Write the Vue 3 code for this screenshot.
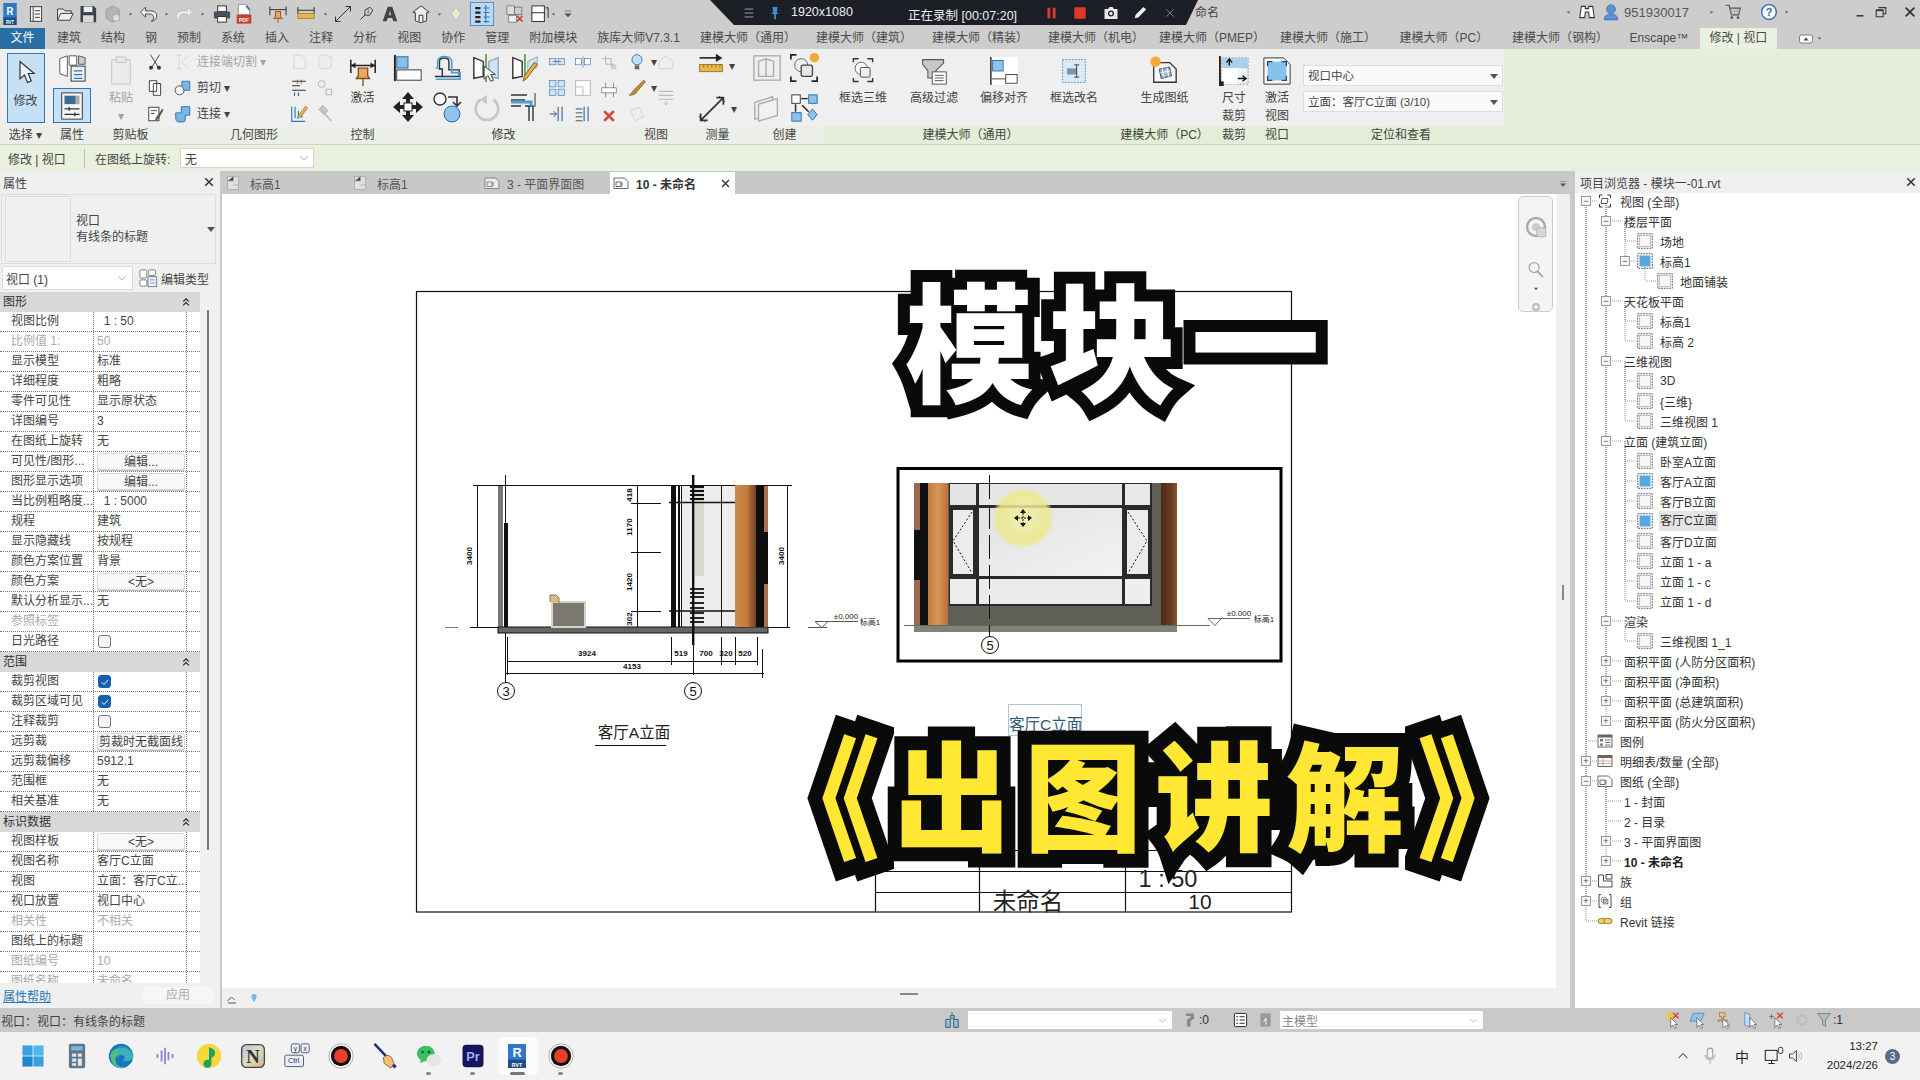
<script setup>
// icon bodies, all on a 32x32 box
const s = 'fill="none" stroke="#333" stroke-width="1.6"'
const d = 'fill="none" stroke="#aaa" stroke-width="1.4"'
const icons = {
  caret: '<path d="M8 11h16l-8 10z" fill="#555"/>',
  rlogo: '<rect x="4" y="0" width="24" height="22" fill="#2f78c8"/><rect x="4" y="21" width="24" height="11" fill="#1d4f86"/><text x="16" y="17" font-size="17" font-weight="700" fill="#fff" text-anchor="middle" font-family="Liberation Sans">R</text><text x="16" y="30" font-size="7" font-weight="700" fill="#fff" text-anchor="middle" font-family="Liberation Sans">RVT</text>',
  page: `<rect x="6" y="3" width="20" height="26" fill="#f4f4f4" ${s}/><path d="M11 3v26M14 10h9M14 16h9M14 22h9" ${s}/>`,
  open: `<path d="M4 26V8h9l3 3h10v4M4 26l5-11h20l-5 11z" fill="#eee" stroke="#444" stroke-width="1.6"/>`,
  save: '<path d="M4 3h21l4 4v22H4z" fill="#39404a"/><rect x="9" y="4" width="14" height="9" fill="#eee"/><rect x="8" y="18" width="17" height="11" fill="#d8d8d8"/>',
  sync: '<path d="M15 3l11 6v14l-11 6-10-6V9z" fill="#b5b5b5" stroke="#888"/><circle cx="21" cy="22" r="6" fill="#ddd" stroke="#888"/>',
  undo: `<path d="M12 5L4 13l8 8v-5h7c4 0 6 3 6 6s-2 5-4 6c6-1 9-5 9-9 0-5-4-8-10-8h-8z" fill="#eee" stroke="#444" stroke-width="1.5"/>`,
  redo: `<path d="M20 5l8 8-8 8v-5h-7c-4 0-6 3-6 6s2 5 4 6c-6-1-9-5-9-9 0-5 4-8 10-8h8z" fill="#eee" stroke="#bbb" stroke-width="1.5"/>`,
  print: '<rect x="9" y="3" width="14" height="9" fill="#fff" stroke="#333" stroke-width="1.6"/><rect x="3" y="12" width="26" height="11" rx="2" fill="#49525c"/><rect x="9" y="20" width="14" height="9" fill="#fff" stroke="#333" stroke-width="1.6"/>',
  pdf: '<path d="M6 2h13l7 7v8H6z" fill="#fff" stroke="#666"/><path d="M20 4l6 6" stroke="#2f78c8" stroke-width="3"/><rect x="3" y="17" width="26" height="13" fill="#c8402c"/><text x="16" y="27" font-size="9" font-weight="700" fill="#fff" text-anchor="middle" font-family="Liberation Sans">PDF</text>',
  pin: `<path d="M3 4v14M29 4v14M3 9h26" ${s}/><path d="M12 12h8v8l3 3H9l3-3zM16 23v7" fill="#e8a860" stroke="#8a4a18" stroke-width="1.4"/>`,
  dim: '<rect x="3" y="15" width="26" height="8" fill="#e6b84a" stroke="#8a6a18"/><path d="M3 5v10M29 5v10M3 10h26" fill="none" stroke="#333" stroke-width="1.6"/>',
  measure: `<path d="M4 28L28 4M20 4h8v8M4 20v8h8" ${s}/>`,
  tag: `<path d="M6 26l8-8M14 9l9-5 5 5-5 9H14z" ${s}/><text x="20" y="15" font-size="9" text-anchor="middle" fill="#333" font-family="Liberation Sans">1</text>`,
  letterA: '<path d="M12 3h8l9 26h-7l-2-6H12l-2 6H3zM14 18h4l-2-8z" fill="#444"/>',
  house: `<path d="M3 13L16 3l13 10-4 1v13l-9 3-9-3V14z" fill="#eee" stroke="#333" stroke-width="1.5"/><path d="M13 28V18h6v10" ${s}/>`,
  sphere: '<path d="M16 3l10 12-10 14L6 15z" fill="#f1e6cf" stroke="#999"/>',
  thin: '<rect x="0" y="0" width="32" height="32" fill="#bcd9f0" stroke="#2f78c8" stroke-width="2"/><path d="M7 8h7M7 14h7M7 20h7M7 26h7" stroke="#222" stroke-width="3"/><path d="M18 8h8M18 14h8M18 20h8M18 26h8M21 4v24" stroke="#2f78c8" stroke-width="1.5"/>',
  closew: '<rect x="3" y="3" width="12" height="14" fill="#ddd" stroke="#555"/><rect x="15" y="5" width="12" height="12" fill="#ccc" stroke="#555"/><rect x="6" y="18" width="12" height="11" fill="#eee" stroke="#555"/><path d="M19 19l9 9M28 19l-9 9" stroke="#c8402c" stroke-width="2.4"/>',
  windows: `<rect x="3" y="3" width="20" height="14" fill="#fff" ${s}/><rect x="3" y="14" width="20" height="14" fill="#fff" ${s}/><path d="M25 6h4v16" ${s}/>`,
  menu: '<path d="M6 8h20M8 15h16l-8 9z" fill="#555" stroke="#555" stroke-width="1.5"/>',

  cursor: '<path d="M8 2v23l6-5 4 10 5-2-4-10h8z" fill="#eaf3fb" stroke="#333" stroke-width="1.6"/>',
  typeprops: '<path d="M3 6l8-3v22l-8-3zM13 3h8v10h-8z" fill="#fff" stroke="#555"/><path d="M23 3l7 2v7h-7z" fill="#ccc" stroke="#555"/><rect x="15" y="14" width="15" height="16" fill="#eee" stroke="#333"/><path d="M18 19h9M18 23h9M18 27h9" stroke="#2f78c8" stroke-width="1.4"/>',
  props: '<rect x="5" y="2" width="22" height="28" fill="#f4f4f4" stroke="#333"/><rect x="8" y="5" width="12" height="9" fill="#3d6d96"/><rect x="20" y="5" width="4" height="9" fill="#aaa"/><path d="M8 19h16M8 25h16M13 17v4M19 23v4" stroke="#333" stroke-width="1.4"/>',
  paste: `<rect x="6" y="4" width="20" height="26" rx="2" fill="#e8e8e8" ${d}/><rect x="11" y="1" width="10" height="6" fill="#ddd" ${d}/>`,
  scissors: `<path d="M8 3l16 26M24 3L8 29" ${s}/><circle cx="9" cy="26" r="3.5" fill="#333"/><circle cx="23" cy="26" r="3.5" fill="#333"/>`,
  copy: `<path d="M6 3h13v5h7v21H13v-7H6z" fill="#fff" ${s}/><path d="M13 8h6v14h-6z" ${s}/>`,
  match: `<rect x="5" y="4" width="18" height="24" fill="#fff" ${s}/><path d="M9 10h10M9 15h6" ${s}/><path d="M29 6L18 22l-3 7 7-4L31 9z" fill="#555"/>`,
  joincut: `<path d="M5 4h8M5 28h8M9 4v24M13 16l14-12M13 16l14 12" ${d}/>`,
  cut: '<circle cx="10" cy="20" r="8" fill="#fff" stroke="#333" stroke-width="1.5"/><path d="M14 4h14v16H17a8 8 0 0 0-3-6z" fill="#7ab8e4" stroke="#2a6aa8" stroke-width="1.5"/>',
  joinb: '<path d="M13 3h15v15H20v10a4 4 0 0 1-4 2H8C4 30 3 26 3 22V14h10z" fill="#7ab8e4" stroke="#2a6aa8" stroke-width="1.6"/>',
  dimA: `<path d="M7 4h14l6 6v18H7z" fill="#f0f0f0" ${d}/>`,
  dimB: `<path d="M5 7l10-4 12 4v18l-12 4-10-4z" fill="#eee" stroke="#aaa" stroke-width="1.4"/>`,
  split: '<path d="M4 4h24M4 12h14M4 20h24" stroke="#333" stroke-width="2"/><path d="M8 24v6M15 24v6" stroke="#2a6aa8" stroke-width="2"/><path d="M13 1v8M20 1v8" stroke="#333"/>',
  circA: `<circle cx="10" cy="9" r="6" ${d}/><rect x="18" y="18" width="10" height="10" ${d}/>`,
  wallj: '<path d="M3 3v26h24M9 3v20M15 10v13M21 16v7" stroke="#2f78c8" stroke-width="2" fill="none"/><path d="M28 2L15 18l-2 6 6-3L31 6z" fill="#e9b44c" stroke="#7a5a10"/>',
  hammer: `<path d="M8 5l9 9M6 8l6-6 8 8-6 6zM15 15l12 13" stroke="#bbb" stroke-width="3" fill="#ddd"/>`,
  flip: '<path d="M3 4v14M29 4v14M3 10h26" fill="none" stroke="#222" stroke-width="1.6"/><path d="M3 10l5-3v6zM29 10l-5-3v6z" fill="#222"/><path d="M11 13h10v8l2 3H9l2-3zM16 24v8" fill="#e8a860" stroke="#8a4a18" stroke-width="1.4"/>',
  align: '<path d="M2 2v28" stroke="#222" stroke-width="2"/><rect x="4" y="4" width="12" height="12" fill="#86bfe8" stroke="#2a6aa8"/><rect x="4" y="18" width="26" height="11" fill="#fff" stroke="#333"/>',
  offset: '<path d="M3 25h8v-8h-3v-8c0-5 10-5 10 0v9h11v7H3" fill="none" stroke="#333" stroke-width="1.5"/><path d="M4 28h26v-7H21v-12C21 2 6 2 6 9v7H4" fill="none" stroke="#4a9fd8" stroke-width="1.8"/>',
  mirror: '<path d="M16 1v30" stroke="#6aa84f" stroke-width="2"/><path d="M3 5l10 4v16l-10 2z" fill="#fff" stroke="#333" stroke-width="1.5"/><path d="M29 5l-10 4v16l10 2z" fill="#cfe3f4" stroke="#8ab" stroke-width="1.5"/><path d="M14 14v14l4-4 3 6 3-1-3-6h5z" fill="#fff" stroke="#333"/>',
  mirror2: '<path d="M16 1v26" stroke="#6aa84f" stroke-width="2"/><path d="M3 5l10 4v16l-10 2z" fill="#fff" stroke="#333" stroke-width="1.5"/><path d="M29 4l-10 5v12l10-6z" fill="#cfe3f4" stroke="#8ab"/><path d="M29 12L18 27l-4 3 1-5 11-15z" fill="#e9b44c" stroke="#7a5a10"/>',
  move: '<path d="M16 1l6 7h-4v6h6v-4l7 6-7 6v-4h-6v6h4l-6 7-6-7h4v-6H8v4l-7-6 7-6v4h6V8h-4z" fill="#222"/><rect x="12" y="12" width="8" height="8" fill="#fff" stroke="#222"/>',
  copy2: '<circle cx="9" cy="8" r="6" fill="#fff" stroke="#333" stroke-width="1.4"/><path d="M17 6h9v8M22 11l4 4 4-4" fill="none" stroke="#333" stroke-width="1.6"/><circle cx="21" cy="23" r="8" fill="#8fc3ea" stroke="#2a6aa8"/>',
  rotate: '<path d="M24 7a12 12 0 1 1-14 0" fill="none" stroke="#c8c8c8" stroke-width="3"/><path d="M17 2l-8 5 8 5z" fill="#c8c8c8"/>',
  trim: '<path d="M2 9h14M2 15h10M2 4h16" stroke="#333" stroke-width="1.4"/><path d="M16 15h8v15M20 15v15" stroke="#333" fill="none" stroke-width="1.4"/><path d="M2 11h20v4" stroke="#4a9fd8" stroke-width="3" fill="none"/><path d="M26 2v14" stroke="#333"/>',
  sA: '<rect x="3" y="10" width="11" height="11" fill="#cfe3f4" stroke="#2a6aa8"/><rect x="18" y="10" width="11" height="11" fill="#cfe3f4" stroke="#2a6aa8"/><path d="M9 15h14" stroke="#333"/>',
  sB: '<rect x="3" y="10" width="10" height="11" fill="#fff" stroke="#2a6aa8"/><rect x="19" y="10" width="10" height="11" fill="#fff" stroke="#2a6aa8"/><path d="M16 6v20" stroke="#2a6aa8"/>',
  sC: `<path d="M10 4v16h16M4 10h16v16" ${d}/><path d="M21 21l8 8M29 21l-8 8" stroke="#bbb" stroke-width="2"/>`,
  sD: '<rect x="3" y="3" width="11" height="11" fill="#cfe3f4" stroke="#2a6aa8"/><rect x="18" y="3" width="11" height="11" fill="#cfe3f4" stroke="#2a6aa8"/><rect x="3" y="18" width="11" height="11" fill="#cfe3f4" stroke="#2a6aa8"/><rect x="18" y="18" width="11" height="11" fill="#cfe3f4" stroke="#2a6aa8"/>',
  sE: `<rect x="3" y="3" width="26" height="26" fill="#fff" ${d}/><path d="M3 14h13v15" ${d}/>`,
  sF: `<path d="M10 3v26M24 3v26" stroke="#444"/><path d="M3 12h26v9H3z" fill="#fff" stroke="#444"/>`,
  sG: '<path d="M3 16h12M10 11l5 5-5 5" fill="none" stroke="#333" stroke-width="1.5"/><path d="M18 3v26M25 3v26" stroke="#2a6aa8" stroke-width="2"/>',
  sH: '<path d="M3 7h12M3 14h12M3 21h12M3 28h12" stroke="#333" stroke-width="1.5"/><path d="M18 3v26M25 3v26" stroke="#2a6aa8" stroke-width="2"/>',
  redX: '<path d="M5 5l22 22M27 5L5 27" stroke="#d8453a" stroke-width="6"/>',
  bulb: '<circle cx="16" cy="12" r="9" fill="#bfe0f6" stroke="#2a6aa8" stroke-width="1.5"/><rect x="12" y="22" width="8" height="7" fill="#666"/>',
  homeD: `<path d="M4 15L16 5l12 10v13H4z" fill="#eee" ${d}/>`,
  paint: '<path d="M28 2L13 17l-5 5c-2 3-3 5-6 7 7 0 12-2 15-8L31 5z" fill="#c8882c" stroke="#5a3a10"/>',
  lines: '<path d="M3 6h26M3 13h26M3 20h26" stroke="#bbb" stroke-width="2"/><path d="M16 22v8M12 26l4 4 4-4" stroke="#bbb" fill="none" stroke-width="1.5"/>',
  section: `<path d="M4 9l16-5 8 17-16 7z" fill="#eee" ${d}/>`,
  ruler: '<path d="M2 6h24" stroke="#222" stroke-width="2"/><path d="M22 1l8 5-8 5z" fill="#222"/><rect x="2" y="14" width="28" height="9" fill="#e6b84a" stroke="#8a6a18"/><path d="M7 14v4M12 14v4M17 14v4M22 14v4M27 14v4" stroke="#8a6a18"/>',
  diag: '<path d="M3 29L29 3M21 3h8v8M3 21v8h8" fill="none" stroke="#333" stroke-width="2"/><path d="M1 24l7 7M24 1l7 7" stroke="#333"/>',
  cubes: `<rect x="2" y="3" width="28" height="26" fill="none" ${d}/><path d="M7 9l8-3 8 3v16H7zM15 6v19" fill="#eee" ${d}/>`,
  crop3d: '<path d="M2 7V2h6M2 25v5h6M30 7V2h-6M30 25v5h-6" fill="none" stroke="#222" stroke-width="1.8"/><circle cx="13" cy="13" r="7" fill="#eee" stroke="#666"/><rect x="13" y="13" width="12" height="12" rx="2" fill="#e6e6e6" stroke="#444" stroke-width="1.4"/><circle cx="27" cy="5" r="5" fill="#f4a83a"/>',
  sheets: `<path d="M3 10l19-6v18L3 28z" fill="#eee" ${d}/><path d="M7 12l20-6v18L7 30z" fill="#f2f2f2" ${d}/>`,
  flow: '<rect x="3" y="2" width="9" height="9" fill="#fff" stroke="#333"/><rect x="21" y="2" width="9" height="9" fill="#8fc3ea" stroke="#2a6aa8"/><path d="M13 6h7M7 12v8M14 13l7 7" stroke="#222" stroke-width="1.5"/><rect x="3" y="21" width="10" height="9" fill="#8fc3ea" stroke="#2a6aa8"/><path d="M25 17l5 6-5 6-5-6z" fill="#8fc3ea" stroke="#2a6aa8"/>',
  crop3: '<path d="M5 6V2h6M5 24v4h6M27 6V2h-6M27 24v4h-6" fill="none" stroke="#333" stroke-width="1.6"/><circle cx="14" cy="13" r="7" fill="#fff" stroke="#555"/><rect x="13" y="12" width="11" height="11" rx="1" fill="#eee" stroke="#444"/>',
  filter: '<path d="M3 3h24v4L18 16v8H9v-8L3 8z" fill="#c8c8c8" stroke="#555" stroke-width="1.2"/><rect x="14" y="17" width="16" height="14" fill="#fff" stroke="#444"/><path d="M17 21h10M17 24h10M17 27h10" stroke="#444"/>',
  offsetA: '<rect x="0" y="0" width="32" height="32" fill="#fff"/><path d="M1 0v32" stroke="#222" stroke-width="1.6"/><rect x="3" y="4" width="12" height="12" fill="#8fc3ea" stroke="#2a6aa8"/><rect x="18" y="20" width="13" height="10" fill="#fff" stroke="#333"/><path d="M2 25h16" stroke="#333"/>',
  rename: '<rect x="3" y="3" width="26" height="26" fill="#dceaf6" stroke="#4a84b8" stroke-dasharray="2 1.5"/><rect x="8" y="13" width="11" height="7" fill="#7a96b0"/><path d="M19 9v14M16 9h6M16 23h6" stroke="#333"/>',
  makesheet: '<path d="M5 7h17l7 7v14H5z" fill="#f6f6f6" stroke="#333" stroke-width="1.4"/><path d="M11 14l11-2 2 9-11 3z" fill="#9fb8cf" stroke="#345"/><path d="M14 13l2 10M19 12l2 10M12 18l11-2" stroke="#fff"/><circle cx="7" cy="6" r="5.5" fill="#f4a83a"/>',
  cropS: '<path d="M1 0v31" stroke="#222" stroke-width="2"/><rect x="3" y="2" width="28" height="28" fill="#eef3f7" stroke="#888" stroke-dasharray="2 1.5"/><rect x="3" y="2" width="28" height="11" fill="#a9cfea"/><rect x="3" y="13" width="17" height="17" fill="#fff"/><path d="M11 10V4M8 7l3-4 3 4M20 24h8M25 21l4 3-4 3" stroke="#111" fill="none" stroke-width="1.4"/><rect x="0" y="27" width="5" height="5" fill="#222"/>',
  activate: '<path d="M2 2h21l7 7v21H2z" fill="#f6f6f6" stroke="#333"/><rect x="6" y="6" width="20" height="20" fill="#86c3ec"/><path d="M6 11V6h5M26 11V6h-5M6 21v5h5M26 21v5h-5" fill="none" stroke="#246" stroke-width="1.4"/>',

  editType: '<rect x="3" y="3" width="11" height="13" rx="2" fill="#fff" stroke="#444"/><rect x="17" y="3" width="11" height="9" rx="2" fill="#fff" stroke="#444"/><rect x="3" y="19" width="11" height="10" rx="2" fill="#fff" stroke="#444"/><rect x="16" y="14" width="14" height="16" fill="#eef" stroke="#345"/><path d="M19 19h8M19 24h8" stroke="#2a6aa8"/>',
  sqNormal: '<rect x="1.5" y="1.5" width="29" height="29" fill="none" stroke="#444" stroke-dasharray="3.5 2" stroke-width="1.8"/><rect x="5" y="5" width="22" height="22" fill="#f6f6f6" stroke="#aaa" stroke-width="1.4"/>',
  sqBlue: '<rect x="1.5" y="1.5" width="29" height="29" fill="none" stroke="#345" stroke-dasharray="3.5 2" stroke-width="1.8"/><rect x="5" y="5" width="22" height="22" fill="#5aa7e0"/>',
  views: '<path d="M5 10V4h6M21 4h6v6M5 22v6h6M27 22v6h-6" fill="none" stroke="#333" stroke-width="2"/><path d="M10 11h12l-2 10H8z" fill="#fff" stroke="#333" stroke-width="1.6"/>',
  legend: '<rect x="2" y="4" width="28" height="24" fill="#fff" stroke="#444" stroke-width="1.6"/><rect x="2" y="4" width="28" height="5" fill="#666"/><rect x="6" y="12" width="6" height="5" fill="#778"/><circle cx="9" cy="23" r="3" fill="#778"/><path d="M16 14h11M16 19h11M16 24h11" stroke="#444" stroke-width="1.5"/>',
  table: '<rect x="2" y="5" width="28" height="22" fill="#fff" stroke="#444" stroke-width="1.6"/><rect x="2" y="5" width="28" height="5" fill="#666"/><path d="M12 10v17M2 16h28M2 21h28" stroke="#c08a80" stroke-width="1.4"/>',
  sheet: '<path d="M2 6h21l7 7v14H2z" fill="#fff" stroke="#444" stroke-width="1.6"/><path d="M6 14h10v9H6zM18 14v9" fill="none" stroke="#444" stroke-width="1.6"/>',
  fam: '<path d="M3 4h10v12h17v12H3zM18 3h12v9H18z" fill="#fff" stroke="#333" stroke-width="1.8"/>',
  group: '<path d="M8 3H4v26h4M24 3h4v26h-4" fill="none" stroke="#333" stroke-width="1.8"/><circle cx="14" cy="14" r="6" fill="#ddd" stroke="#555"/><rect x="13" y="13" width="9" height="9" fill="#bbb" stroke="#444"/>',
  link: '<rect x="2" y="11" width="16" height="10" rx="5" fill="#f0d066" stroke="#8a6a18" stroke-width="1.6"/><rect x="14" y="11" width="16" height="10" rx="5" fill="#f0d066" stroke="#8a6a18" stroke-width="1.6"/>',

  win: '<rect x="3" y="3" width="12.5" height="12.5" fill="#3aa0e4"/><rect x="16.5" y="3" width="12.5" height="12.5" fill="#52b6ee"/><rect x="3" y="16.5" width="12.5" height="12.5" fill="#1e86d2"/><rect x="16.5" y="16.5" width="12.5" height="12.5" fill="#3aa0e4"/>',
  calc: '<rect x="6" y="1" width="20" height="30" rx="2" fill="#5f7788"/><rect x="9" y="4" width="14" height="5" fill="#7fb6d8"/><path d="M10 13h5v4h-5zM17 13h5v4h-5zM10 19h5v4h-5zM17 19h5v9h-5zM10 25h5v3h-5z" fill="#dfe6ea"/>',
  edge: '<circle cx="16" cy="16" r="15" fill="#1674c4"/><path d="M3 14C6 3 28 2 31 17c0 4-7 6-12 4 3-2 3-6-3-7-6 0-9 6-5 12 2 3 8 5 13 3-9 6-22-1-21-15z" fill="#4ec07a"/><path d="M12 20c1-5 8-7 8-2 0 2-2 3-2 4 3 2 13 0 13-5-1-11-12-14-18-13z" fill="#33a7d8" opacity=".6"/>',
  audio: '<path d="M5 13v6M11 8v16M16 4v24M21 10v12M27 13v6" stroke="#8c82d8" stroke-width="2.6"/>',
  qqm: '<circle cx="16" cy="16" r="15" fill="#f6d83a"/><path d="M16 5l6 3c3 5 1 9-3 10v7a5 5 0 1 1-3-4z" fill="#20a060"/>',
  nApp: '<defs><linearGradient id="napp" x1="0" y1="0" x2="1" y2="1"><stop offset="0" stop-color="#c8b8e0"/><stop offset=".5" stop-color="#d8e0c0"/><stop offset="1" stop-color="#e0b090"/></linearGradient></defs><rect x="2" y="2" width="28" height="28" rx="6" fill="url(#napp)" stroke="#444" stroke-width="1.6"/><text x="16" y="25" font-size="23" font-weight="700" fill="#333" text-anchor="middle" font-family="Liberation Serif">N</text>',
  keys: '<rect x="9" y="1" width="10" height="11" rx="2" fill="#eef" stroke="#345"/><rect x="21" y="1" width="10" height="11" rx="2" fill="#eef" stroke="#345"/><rect x="1" y="15" width="23" height="14" rx="2" fill="#eef" stroke="#345"/><text x="14" y="10" font-size="8" text-anchor="middle" fill="#234" font-family="Liberation Sans">y</text><text x="26" y="10" font-size="8" text-anchor="middle" fill="#234" font-family="Liberation Sans">x</text><text x="12" y="25" font-size="9" text-anchor="middle" fill="#234" font-family="Liberation Sans">Ctrl</text>',
  rec: '<circle cx="16" cy="16" r="15" fill="#fff" stroke="#999"/><circle cx="16" cy="16" r="12.5" fill="#111"/><circle cx="16" cy="16" r="8.5" fill="#e8402c"/>',
  brush: '<path d="M3 1l19 20" stroke="#1d2f86" stroke-width="3"/><path d="M14 18c4-4 8-3 10 0l3 7-4 6-8-6z" fill="#f0c078" stroke="#7a5a20"/><path d="M26 27l3 3" stroke="#1d2f86" stroke-width="4"/>',
  wechat: '<ellipse cx="12" cy="13" rx="11" ry="9.5" fill="#38c060"/><path d="M6 20l-1 5 6-3z" fill="#38c060"/><ellipse cx="22" cy="21" rx="9" ry="7.5" fill="#e4e4e4"/><circle cx="8" cy="11" r="1.6" fill="#145"/><circle cx="16" cy="11" r="1.6" fill="#145"/>',
  pr: '<rect x="2" y="1" width="28" height="30" rx="5" fill="#15155e"/><text x="16" y="23" font-size="17" font-weight="700" fill="#a9a9ff" text-anchor="middle" font-family="Liberation Sans">Pr</text>',
  mic: '<rect x="11" y="2" width="10" height="18" rx="5" fill="none" stroke="#999" stroke-width="1.8"/><path d="M7 14c0 12 18 12 18 0M16 25v5" fill="none" stroke="#999" stroke-width="1.6"/>',
  chev: '<path d="M6 21L16 10l10 11" fill="none" stroke="#222" stroke-width="2.2"/>',
  pcnet: `<rect x="2" y="7" width="19" height="16" fill="none" stroke="#222" stroke-width="1.6"/><path d="M7 28h10M12 23v5" stroke="#222" stroke-width="1.6"/><rect x="23" y="2" width="7" height="10" rx="3" fill="none" stroke="#222" stroke-width="1.4"/>`,
  speaker: '<path d="M3 12h6l8-7v22l-8-7H3z" fill="none" stroke="#222" stroke-width="1.6"/><path d="M21 11c2 3 2 7 0 10M25 8c3 5 3 11 0 16" fill="none" stroke="#999" stroke-width="1.4"/>',

  people: '<path d="M13 8h7v5h-7zM5 15h8v14H5zM19 15h8v14h-8z" fill="#8fc3ea" stroke="#345" stroke-width="1.5"/><path d="M16 2v6" stroke="#4a9" stroke-width="3"/>',
  q0: '<path d="M8 3h16v10l-7 5v11H10V15l7-4V8H8z" fill="#888"/>',
  listbox: '<rect x="3" y="2" width="26" height="28" rx="2" fill="#fff" stroke="#222" stroke-width="2"/><path d="M7 9h4M7 16h4M7 23h4M14 9h11M14 16h11M14 23h11" stroke="#222" stroke-width="2"/>',
  lockbox: '<rect x="5" y="2" width="22" height="28" fill="#999"/><path d="M12 20l5-8v14" stroke="#fff" stroke-width="2" fill="none"/>',
  stA: '<circle cx="10" cy="9" r="7" fill="#eec060"/><path d="M16 3l10 10M26 3L16 13" stroke="#d8453a" stroke-width="2.6"/><path d="M12 12v17l4-4 3 6 3-1-3-6h5z" fill="#fff" stroke="#333"/>',
  stB: '<path d="M7 4h20l-6 14H2z" fill="#8fc3ea" stroke="#2a6aa8"/><path d="M14 12v17l4-4 3 6 3-1-3-6h5z" fill="#fff" stroke="#333"/>',
  stC: '<path d="M8 3h10v7h-3v6h7v2H5v-2h7v-6H8z" fill="#eec090" stroke="#8a5a18"/><path d="M14 14v16l4-4 3 5 3-1-3-5h5z" fill="#fff" stroke="#333"/>',
  stD: '<path d="M5 3l9 3v22l-9-3z" fill="#bfe0f6" stroke="#2a6aa8"/><path d="M14 12v17l4-4 3 6 3-1-3-6h5z" fill="#fff" stroke="#333"/>',
  stE: '<path d="M4 10h8M8 6v8" stroke="#333"/><path d="M18 3l10 10M28 3L18 13" stroke="#d8453a" stroke-width="2.6"/><path d="M14 12v17l4-4 3 6 3-1-3-6h5z" fill="#fff" stroke="#333"/>',
  gear: '<circle cx="16" cy="16" r="9" fill="none" stroke="#bbb" stroke-width="5" stroke-dasharray="5 2"/>',
  funnel: '<path d="M3 3h26L19 16v13l-6-4v-9z" fill="#bbb" stroke="#666" stroke-width="1.4"/>',
  // recorder bar
  hamb: '<path d="M6 7h20M6 16h20M6 25h20" stroke="#ddd" stroke-width="1.5"/>',
  recpin: '<path d="M10 2h12l-2 12 5 4H18v12h-4V18H7l5-4z" fill="#3d8ed8"/>',
  pause: '<path d="M6 3h7v26H6zM19 3h7v26h-7z" fill="#e0392b"/>',
  stop: '<rect x="3" y="3" width="26" height="26" rx="2" fill="#e0392b"/>',
  camera: '<path d="M3 8h7l3-4h6l3 4h7v20H3z" fill="#e8e8e8"/><circle cx="16" cy="17" r="6" fill="#222"/><circle cx="16" cy="17" r="3.4" fill="#e8e8e8"/>',
  pen: '<path d="M24 2l6 6L12 26l-8 2 2-8z" fill="#eee"/>',
  xThin: '<path d="M6 6l20 20M26 6L6 26" stroke="#ccc" stroke-width="1.4"/>',
  binoc: '<path d="M6 6h7v4h6V6h7l3 20h-9l-1-10h-6l-1 10H3z" fill="#fff" stroke="#333" stroke-width="1.8"/>',
  user: '<circle cx="16" cy="11" r="8" fill="#5a94d4" stroke="#2a5a98"/><path d="M4 30c0-9 6-10 12-10s12 1 12 10z" fill="#5a94d4" stroke="#2a5a98"/>',
  cart: '<path d="M3 4h6l4 17h13l3-12H11" fill="none" stroke="#555" stroke-width="2"/><path d="M13 10v10M19 10v10M24 10v10M11 15h17" stroke="#8a9" stroke-width="1"/><circle cx="14" cy="26" r="2.4" fill="#555"/><circle cx="25" cy="26" r="2.4" fill="#555"/>',
  help: '<circle cx="16" cy="16" r="13" fill="#fff" stroke="#2a6ab8" stroke-width="2.4"/><text x="16" y="23" font-size="20" font-weight="700" text-anchor="middle" fill="#2a6ab8" font-family="Liberation Sans">?</text>',
  minimize: '<rect x="8" y="23" width="16" height="3.4" fill="#333"/>',
  restore: '<path d="M10 6h17v14h-6M5 12h16v15H5z" fill="none" stroke="#333" stroke-width="2.4"/><path d="M5 12h16" stroke="#333" stroke-width="4"/>',
  xBold: '<path d="M6 6l20 20M26 6L6 26" stroke="#333" stroke-width="4"/>',
  panelBtn: '<rect x="3" y="8" width="26" height="16" rx="4" fill="#fff" stroke="#555" stroke-width="1.4"/><path d="M11 19l5-6 5 6z" fill="#444"/>',
  tabplan: '<rect x="5" y="3" width="22" height="26" fill="#eee" stroke="#999" stroke-width="1.6"/><path d="M5 12h12V3M17 20h10" stroke="#999" stroke-width="1.6"/>',
  navWheel: '<circle cx="16" cy="16" r="11" fill="none" stroke="#aaa" stroke-width="3"/><circle cx="16" cy="16" r="5" fill="#ccc"/><rect x="17" y="17" width="11" height="11" rx="2" fill="#d8d8d8" stroke="#aaa"/>',
  navZoom: '<circle cx="13" cy="12" r="8" fill="none" stroke="#aaa" stroke-width="2"/><path d="M18 18l9 9" stroke="#aaa" stroke-width="3"/>',
  sLink: '<path d="M3 22c3-1 4-7 8-7 3 0 3 4 6 4M4 26h16" fill="none" stroke="#555" stroke-width="2"/>',
  sPin: '<path d="M16 5a7 7 0 0 1 7 7c0 5-7 15-7 15S9 17 9 12a7 7 0 0 1 7-7z" fill="#7ab8e4"/>'
}

// places items at centre x values in a flex row
const placed = (list) => {
  let right = 0
  return list.map(([i, cx, size = 18, h]) => {
    const m = cx - size / 2 - right
    right = cx + size / 2
    return { i, size, h: h || size, m }
  })
}

const titleLeft = placed([
  ['rlogo', 10, 18, 22], ['page', 36], ['open', 65, 20], ['save', 88, 20], ['sync', 113, 20], ['caret', 130, 7],
  ['undo', 148, 20], ['caret', 166, 7], ['redo', 185, 20], ['caret', 202, 7], ['print', 222, 20], ['pdf', 244, 18, 22],
  ['pin', 278, 20], ['dim', 306, 20], ['caret', 325, 7], ['measure', 343, 20], ['tag', 366, 18], ['letterA', 390, 18],
  ['house', 421, 20], ['caret', 439, 7], ['sphere', 456, 16], ['thin', 482, 24], ['closew', 515, 20], ['windows', 540, 20],
  ['caret', 553, 7], ['menu', 568, 12]
])
const titleRight = placed([
  ['caret', 248, 7], ['binoc', 267, 18], ['user', 291, 18]
])
const titleEnd = placed([
  ['caret', 3, 7], ['cart', 25, 18], ['help', 61, 18], ['caret', 78, 7], ['minimize', 152, 14], ['restore', 173, 14], ['xBold', 202, 14]
])

const tabsA = ['建筑', '结构', '钢', '预制', '系统', '插入', '注释', '分析', '视图', '协作', '管理', '附加模块', '族库大师V7.3.1']
const tabsB = ['建模大师（通用）', '建模大师（建筑）', '建模大师（精装）', '建模大师（机电）', '建模大师（PMEP）', '建模大师（施工）', '建模大师（PC）', '建模大师（钢构）']

const sm = (i, t, extra = {}) => ({ i, t, size: 18, ...extra })
const panels = [
  { label: '选择 ▾', w: 51, cols: [{ w: 51, items: [{ i: 'cursor', t: '修改', size: 24, cls: 'sel tall' }] }] },
  { label: '属性', w: 42, cols: [{ w: 42, items: [{ i: 'typeprops', size: 30 }, { i: 'props', size: 30, cls: 'sel box' }] }] },
  { label: '剪贴板', w: 75, pl: 6, cols: [
    { w: 44, items: [{ i: 'paste', t: '粘贴\n▾', size: 32, cls: 'tile dim' }] },
    { w: 24, items: [sm('scissors'), sm('copy'), sm('match')] }
  ] },
  { label: '几何图形', w: 172, pl: 6, cols: [
    { w: 112, items: [sm('joincut', '连接端切割 ▾', { cls: 'row dim' }), sm('cut', '剪切 ▾', { cls: 'row' }), sm('joinb', '连接 ▾', { cls: 'row' })] },
    { w: 26, items: [sm('dimA', '', { cls: 'dim' }), sm('split'), sm('wallj')] },
    { w: 26, items: [sm('dimB', '', { cls: 'dim' }), sm('circA'), sm('hammer')] }
  ] },
  { label: '控制', w: 45, cols: [{ w: 45, items: [{ i: 'flip', t: '激活', size: 32, cls: 'tile' }] }] },
  { label: '修改', w: 237, pl: 3, cols: [
    { w: 39, items: [{ i: 'align', size: 30 }, { i: 'move', size: 32 }] },
    { w: 39, items: [{ i: 'offset', size: 30 }, { i: 'copy2', size: 32 }] },
    { w: 39, items: [{ i: 'mirror', size: 30 }, { i: 'rotate', size: 30 }] },
    { w: 39, items: [{ i: 'mirror2', size: 30 }, { i: 'trim', size: 32 }] },
    { w: 26, items: [sm('sA'), sm('sD'), sm('sG')] },
    { w: 26, items: [sm('sB'), sm('sE'), sm('sH')] },
    { w: 26, items: [sm('sC'), sm('sF'), sm('redX', '', { size: 14 })] }
  ] },
  { label: '视图', w: 68, pl: 6, cols: [
    { w: 26, items: [sm('bulb', '▾', { cls: 'row' }), sm('paint', '▾', { cls: 'row' }), sm('section', '', { cls: 'row dim' })] },
    { w: 24, items: [sm('homeD', '', { cls: 'dim' }), sm('lines'), { i: 'caret', size: 1 }] }
  ] },
  { label: '测量', w: 55, pl: 8, cols: [{ w: 47, items: [{ i: 'ruler', t: '▾', size: 26, cls: 'row' }, { i: 'diag', t: '▾', size: 28, cls: 'row' }] }] },
  { label: '创建', w: 79, pl: 3, cols: [
    { w: 38, items: [{ i: 'cubes', size: 30 }, { i: 'sheets', size: 30 }] },
    { w: 36, items: [{ i: 'crop3d', size: 30 }, { i: 'flow', size: 30 }] }
  ] },
  { label: '建模大师（通用）', w: 293, pl: 3, cls: 'green', cols: [
    { w: 72, items: [{ i: 'crop3', t: '框选三维', size: 28, cls: 'tile' }] },
    { w: 70, items: [{ i: 'filter', t: '高级过滤', size: 28, cls: 'tile' }] },
    { w: 70, items: [{ i: 'offsetA', t: '偏移对齐', size: 28, cls: 'tile' }] },
    { w: 70, items: [{ i: 'rename', t: '框选改名', size: 28, cls: 'tile' }] }
  ] },
  { label: '建模大师（PC）', w: 95, cls: 'green', cols: [{ w: 95, items: [{ i: 'makesheet', t: '生成图纸', size: 30, cls: 'tile' }] }] },
  { label: '裁剪', w: 44, cls: 'green', cols: [{ w: 44, items: [{ i: 'cropS', t: '尺寸\n裁剪', size: 30, cls: 'tile' }] }] },
  { label: '视口', w: 42, cls: 'green', cols: [{ w: 42, items: [{ i: 'activate', t: '激活\n视图', size: 30, cls: 'tile' }] }] }
]

const sections = [
  { name: '图形', rows: [
    { k: '视图比例', v: '  1 : 50' }, { k: '比例值 1:', v: '50', dim: true }, { k: '显示模型', v: '标准' }, { k: '详细程度', v: '粗略' },
    { k: '零件可见性', v: '显示原状态' }, { k: '详图编号', v: '3' }, { k: '在图纸上旋转', v: '无' },
    { k: '可见性/图形...', btn: '编辑...' }, { k: '图形显示选项', btn: '编辑...' }, { k: '当比例粗略度...', v: '  1 : 5000' },
    { k: '规程', v: '建筑' }, { k: '显示隐藏线', v: '按规程' }, { k: '颜色方案位置', v: '背景' }, { k: '颜色方案', btn: '<无>' },
    { k: '默认分析显示...', v: '无' }, { k: '参照标签', v: '', dim: true }, { k: '日光路径', check: 0 }
  ] },
  { name: '范围', rows: [
    { k: '裁剪视图', check: 1 }, { k: '裁剪区域可见', check: 1 }, { k: '注释裁剪', check: 0 }, { k: '远剪裁', btn: '剪裁时无截面线' },
    { k: '远剪裁偏移', v: '5912.1' }, { k: '范围框', v: '无' }, { k: '相关基准', v: '无' }
  ] },
  { name: '标识数据', rows: [
    { k: '视图样板', btn: '<无>' }, { k: '视图名称', v: '客厅C立面' }, { k: '视图', v: '立面：客厅C立...' }, { k: '视口放置', v: '视口中心' },
    { k: '相关性', v: '不相关', dim: true }, { k: '图纸上的标题', v: '' }, { k: '图纸编号', v: '10', dim: true }, { k: '图纸名称', v: '未命名', dim: true }
  ] }
]

const tree = [
  ['视图 (全部)', 0, '-', 'views'], ['楼层平面', 1, '-'], ['场地', 2, '', 'sqNormal'], ['标高1', 2, '-', 'sqBlue'], ['地面铺装', 3, '', 'sqNormal'],
  ['天花板平面', 1, '-'], ['标高1', 2, '', 'sqNormal'], ['标高 2', 2, '', 'sqNormal'], ['三维视图', 1, '-'], ['3D', 2, '', 'sqNormal'],
  ['{三维}', 2, '', 'sqNormal'], ['三维视图 1', 2, '', 'sqNormal'], ['立面 (建筑立面)', 1, '-'], ['卧室A立面', 2, '', 'sqNormal'], ['客厅A立面', 2, '', 'sqBlue'],
  ['客厅B立面', 2, '', 'sqNormal'], ['客厅C立面', 2, '', 'sqBlue', 'cur'], ['客厅D立面', 2, '', 'sqNormal'], ['立面 1 - a', 2, '', 'sqNormal'], ['立面 1 - c', 2, '', 'sqNormal'],
  ['立面 1 - d', 2, '', 'sqNormal'], ['渲染', 1, '-'], ['三维视图 1_1', 2, '', 'sqNormal'], ['面积平面 (人防分区面积)', 1, '+'], ['面积平面 (净面积)', 1, '+'],
  ['面积平面 (总建筑面积)', 1, '+'], ['面积平面 (防火分区面积)', 1, '+'], ['图例', 0, '', 'legend'], ['明细表/数量 (全部)', 0, '+', 'table'], ['图纸 (全部)', 0, '-', 'sheet'],
  ['1 - 封面', 1, ''], ['2 - 目录', 1, ''], ['3 - 平面界面图', 1, '+'], ['10 - 未命名', 1, '+', null, 'bold'], ['族', 0, '+', 'fam'], ['组', 0, '+', 'group'], ['Revit 链接', 0, '', 'link']
].map(([t, lv, tog, icon, cls]) => ({ t, lv, tog, icon, cls }))

// dotted guide lines of the tree
const guideX = [16, 36, 55, 75]
const guideEnd = [27, 51, 67, 87]
const rowY = (i) => i * 20 + 10
const treeGuides = tree.map((r, i) => {
  let parent = i - 1
  while (parent >= 0 && tree[parent].lv >= r.lv) parent--
  const x = guideX[r.lv]
  const top = parent < 0 ? rowY(0) : rowY(parent)
  return `M${x} ${top}V${rowY(i)}M${x} ${rowY(i)}H${guideEnd[r.lv]}`
}).join('')

const statusIcons = placed([
  ['people', 52, 18]
])
const statusFilters = placed([
  ['stA', 14], ['stB', 39], ['stC', 65], ['stD', 92], ['stE', 117], ['gear', 143, 16], ['funnel', 165, 16]
])
const taskIcons = placed([
  ['win', 33, 26], ['calc', 77, 26], ['edge', 121, 26], ['audio', 165, 22], ['qqm', 209, 26], ['nApp', 253, 26], ['keys', 297, 26], ['rec', 341, 26],
  ['brush', 385, 26], ['wechat', 429, 26], ['pr', 473, 24], ['rlogo', 517, 24], ['rec', 561, 26]
])
const trayIcons = placed([
  ['chev', 10, 14], ['mic', 37, 18]
])

const vTicks = [503, 552, 611]
const hatch = [487, 491, 495, 499]
const hatchB = [589, 593, 597, 603, 608, 613, 618, 622]
</script>

<template>
  <div class="app">
    <!-- quick access bar -->
    <div class="titlebar">
      <svg v-for="(c, n) in titleLeft" :key="n" :width="c.size" :height="c.h" :style="{ marginLeft: c.m + 'px' }" viewBox="0 0 32 32" preserveAspectRatio="none" v-html="icons[c.i]"></svg>
      <div class="doc-name">命名</div>
      <div class="title-right">
        <svg v-for="(c, n) in titleRight" :key="n" :width="c.size" :height="c.h" :style="{ marginLeft: c.m + 'px' }" viewBox="0 0 32 32" v-html="icons[c.i]"></svg>
        <span class="uid">951930017</span>
        <svg v-for="(c, n) in titleEnd" :key="n" :width="c.size" :height="c.h" :style="{ marginLeft: c.m + 'px' }" viewBox="0 0 32 32" v-html="icons[c.i]"></svg>
      </div>
      <!-- recorder overlay -->
      <div class="recorder">
        <svg class="rec-bg" width="488" height="25" viewBox="0 0 488 25"><path d="M0 0h488l-12 25H24z" fill="#1c2026"/></svg>
        <svg class="rec-ic hamb" width="14" height="14" viewBox="0 0 32 32" v-html="icons.hamb"></svg>
        <svg class="rec-ic pin" width="14" height="16" viewBox="0 0 32 32" v-html="icons.recpin"></svg>
        <span class="rec-size">1920x1080</span>
        <span class="rec-time">正在录制 [00:07:20]</span>
        <svg class="rec-ic pause" width="13" height="14" viewBox="0 0 32 32" v-html="icons.pause"></svg>
        <svg class="rec-ic stop" width="14" height="14" viewBox="0 0 32 32" v-html="icons.stop"></svg>
        <svg class="rec-ic cam" width="16" height="16" viewBox="0 0 32 32" v-html="icons.camera"></svg>
        <svg class="rec-ic pen" width="14" height="14" viewBox="0 0 32 32" v-html="icons.pen"></svg>
        <svg class="rec-ic closer" width="12" height="12" viewBox="0 0 32 32" v-html="icons.xThin"></svg>
      </div>
    </div>

    <!-- ribbon tabs -->
    <div class="tabs">
      <div class="tab file">文件</div>
      <div v-for="t in tabsA" :key="t" class="tab">{{ t }}</div>
      <div v-for="t in tabsB" :key="t" class="tab wide">{{ t }}</div>
      <div class="tab enscape">Enscape™</div>
      <div class="tab active">修改 | 视口</div>
      <svg class="tab-ic" width="16" height="16" viewBox="0 0 32 32" v-html="icons.panelBtn"></svg>
      <svg width="7" height="7" viewBox="0 0 32 32" v-html="icons.caret"></svg>
    </div>

    <!-- ribbon -->
    <div class="ribbon">
      <div v-for="p in panels" :key="p.label" class="panel" :class="p.cls" :style="{ width: p.w + 'px' }">
        <div class="panel-body" :style="{ paddingLeft: (p.pl || 0) + 'px' }">
          <div v-for="(c, n) in p.cols" :key="n" class="col" :style="{ width: c.w + 'px' }">
            <div v-for="(it, m) in c.items" :key="m" class="tool" :class="it.cls">
              <svg :width="it.size" :height="it.size" viewBox="0 0 32 32" v-html="icons[it.i]"></svg>
              <span v-if="it.t">{{ it.t }}</span>
            </div>
          </div>
        </div>
        <div class="panel-label">{{ p.label }}</div>
      </div>
      <div class="panel green locate">
        <div class="panel-body locate-body">
          <div class="rb-select">视口中心<i class="rb-arrow"></i></div>
          <div class="rb-select">立面：客厅C立面 (3/10)<i class="rb-arrow"></i></div>
        </div>
        <div class="panel-label">定位和查看</div>
      </div>
      <div class="ribbon-rest"></div>
    </div>

    <!-- options bar -->
    <div class="options">
      <span class="opt-mode">修改 | 视口</span>
      <span class="opt-sep"></span>
      <span class="opt-label">在图纸上旋转:</span>
      <div class="opt-select">无<svg width="10" height="10" viewBox="0 0 32 32"><path d="M5 11l11 11 11-11" fill="none" stroke="#888" stroke-width="2.5"/></svg></div>
    </div>

    <div class="main">
      <!-- properties -->
      <aside class="props">
        <div class="pane-head">属性<svg width="12" height="12" viewBox="0 0 32 32" v-html="icons.xBold"></svg></div>
        <div class="type-box">
          <div class="type-thumb"></div>
          <div class="type-name">
            <div>视口</div>
            <div>有线条的标题</div>
          </div>
          <i class="rb-arrow"></i>
        </div>
        <div class="inst-row">
          <div class="inst-select">视口 (1)<svg width="10" height="10" viewBox="0 0 32 32"><path d="M5 11l11 11 11-11" fill="none" stroke="#999" stroke-width="2.5"/></svg></div>
          <svg width="20" height="20" viewBox="0 0 32 32" v-html="icons.editType"></svg>
          <span>编辑类型</span>
        </div>
        <div class="grid-wrap">
          <div class="grid">
            <template v-for="sec in sections" :key="sec.name">
              <div class="sec-head">{{ sec.name }}
                <svg width="10" height="10" viewBox="0 0 32 32"><path d="M7 15l9-9 9 9M7 27l9-9 9 9" fill="none" stroke="#222" stroke-width="3.4"/></svg>
              </div>
              <div v-for="r in sec.rows" :key="r.k" class="prop-row" :class="{ dim: r.dim }">
                <div class="pk">{{ r.k }}</div>
                <div class="pv">
                  <span v-if="r.btn" class="pbtn">{{ r.btn }}</span>
                  <span v-else-if="r.check !== undefined" class="pcheck" :class="{ on: r.check }">
                    <svg v-if="r.check" width="10" height="10" viewBox="0 0 32 32"><path d="M6 17l7 7L26 9" fill="none" stroke="#fff" stroke-width="3"/></svg>
                  </span>
                  <template v-else>{{ r.v }}</template>
                </div>
                <div class="px"></div>
              </div>
            </template>
          </div>
          <div class="grid-scroll"></div>
        </div>
        <div class="props-foot">
          <a class="help-link">属性帮助</a>
          <span class="apply">应用</span>
        </div>
      </aside>

      <!-- drawing area -->
      <section class="center">
        <div class="doc-tabs">
          <div class="doc-tab t1"><svg width="16" height="16" viewBox="0 0 32 32" v-html="icons.tabplan"></svg>标高1</div>
          <div class="doc-tab t2"><svg width="16" height="16" viewBox="0 0 32 32" v-html="icons.tabplan"></svg>标高1</div>
          <div class="doc-tab t3"><svg width="16" height="16" viewBox="0 0 32 32" v-html="icons.sheet"></svg>3 - 平面界面图</div>
          <div class="doc-tab cur"><svg width="16" height="16" viewBox="0 0 32 32" v-html="icons.sheet"></svg>10 - 未命名<svg class="doc-x" width="11" height="11" viewBox="0 0 32 32" v-html="icons.xBold"></svg></div>
          <svg class="doc-menu" width="10" height="10" viewBox="0 0 32 32" v-html="icons.menu"></svg>
        </div>
        <div class="canvas-row">
          <div class="canvas">
            <svg class="sheet" width="1334" height="794" viewBox="222 194 1334 794">
              <defs>
                <linearGradient id="wood" x1="0" x2="1"><stop offset="0" stop-color="#c98a4e"/><stop offset=".55" stop-color="#c67c3c"/><stop offset="1" stop-color="#6e4222"/></linearGradient>
                <linearGradient id="wood2" x1="0" x2="1"><stop offset="0" stop-color="#c07a3c"/><stop offset=".5" stop-color="#d8965c"/><stop offset="1" stop-color="#b8703a"/></linearGradient>
                <linearGradient id="wood3" x1="0" x2="1"><stop offset="0" stop-color="#4c2c18"/><stop offset=".7" stop-color="#6e3e22"/><stop offset="1" stop-color="#8a5a3a"/></linearGradient>
                <linearGradient id="glass" x1="0" x2="1" y1="0" y2="1"><stop offset="0" stop-color="#e2e2e2"/><stop offset="1" stop-color="#f2f2f2"/></linearGradient>
                <radialGradient id="halo"><stop offset="0" stop-color="#f2f0a8"/><stop offset=".85" stop-color="#ece98a"/><stop offset="1" stop-color="#ece98a" stop-opacity=".3"/></radialGradient>
              </defs>

              <!-- sheet and title block -->
              <rect x="416.5" y="291.5" width="875" height="620.5" fill="#fff" stroke="#111" stroke-width="1.2"/>
              <path d="M875.5 850V912M979.5 850V912M1125.5 850V912M875 850.5H1292M875 871.5H1292M875 892.5H1292" stroke="#111" stroke-width="1.2"/>
              <text x="1168" y="887" class="tb big">1 : 50</text>
              <text x="1028" y="910" class="tb big">未命名</text>
              <text x="1200" y="909" class="tb">10</text>

              <!-- elevation A -->
              <rect x="682" y="485" width="53" height="142" fill="#ededed"/>
              <rect x="695" y="486" width="9" height="90" fill="#d9d9d1"/>
              <rect x="498" y="485" width="5" height="142" fill="#777"/>
              <rect x="504" y="523" width="4" height="104" fill="#111"/>
              <path d="M505.5 475V700M473 485.5H792M470 627.5H790" stroke="#111" fill="none"/>
              <path d="M445 627.5H458" stroke="#777"/>
              <rect x="498" y="627" width="270" height="6" fill="#666" stroke="#111"/>
              <rect x="671" y="485" width="5" height="142" fill="#111"/>
              <rect x="678" y="485" width="2" height="142" fill="#111"/>
              <path d="M681.5 485V627M721.5 485V627" stroke="#111"/>
              <rect x="692" y="475" width="2.4" height="170" fill="#111"/>
              <path v-for="y in hatch" :key="y" :d="`M690 ${y}H704`" stroke="#111" stroke-width="2"/>
              <path v-for="y in hatchB" :key="y" :d="`M690 ${y}H704`" stroke="#111" stroke-width="1.8"/>
              <path d="M669 502.5H735M669 611H735" stroke="#111" stroke-width="1.6"/>
              <rect x="735" y="485" width="21" height="142" fill="url(#wood)"/>
              <rect x="756" y="485" width="8" height="142" fill="#0e0e0e"/>
              <rect x="764" y="486" width="4" height="141" fill="#a87050"/>
              <rect x="763" y="532" width="5" height="52" fill="#0e0e0e"/>
              <path d="M477.5 485V627M637.5 485V627M787.5 485V627" stroke="#111"/>
              <path v-for="y in vTicks" :key="y" :d="`M631 ${y + 0.5}H661`" stroke="#111"/>
              <rect x="552" y="602" width="33" height="25" fill="#7b7871" stroke="#d8d4c4" stroke-width="2"/>
              <path d="M550 602v-7h6l3 3v5" fill="#d8bd8a" stroke="#8a7a50"/>
              <path d="M507.5 637V675M671.5 637V665M693.5 637V675M721.5 637V665M735.5 637V665M757.5 637V665M762.5 649V678" stroke="#111" fill="none"/>
              <path d="M507 661.5H758M505 673.5H764" stroke="#111"/>
              <text x="587" y="656" class="dm">3924</text>
              <text x="632" y="669" class="dm">4153</text>
              <text x="681" y="656" class="dm">519</text>
              <text x="706" y="656" class="dm">700</text>
              <text x="726" y="656" class="dm">320</text>
              <text x="745" y="656" class="dm">520</text>
              <text class="dm" transform="translate(632 495) rotate(-90)">418</text>
              <text class="dm" transform="translate(632 527) rotate(-90)">1170</text>
              <text class="dm" transform="translate(632 582) rotate(-90)">1420</text>
              <text class="dm" transform="translate(632 619) rotate(-90)">302</text>
              <text class="dm" transform="translate(472 556) rotate(-90)">3400</text>
              <text class="dm" transform="translate(784 556) rotate(-90)">3400</text>
              <circle cx="506" cy="691" r="8.5" fill="#fff" stroke="#111"/>
              <circle cx="693" cy="691" r="8.5" fill="#fff" stroke="#111"/>
              <text x="506" y="696" class="gr">3</text>
              <text x="693" y="696" class="gr">5</text>
              <text x="634" y="738" class="ttl">客厅A立面</text>
              <path d="M595 745.5H666" stroke="#111"/>
              <path d="M808 627.5H827M815 621.5H858M815 621.5l7 6 6-6" stroke="#555" fill="none"/>
              <text x="846" y="619" class="lv">±0.000</text>
              <text x="870" y="625" class="lv">标高1</text>

              <!-- elevation C viewport -->
              <rect x="898" y="468.5" width="383" height="192.5" fill="#fff" stroke="#000" stroke-width="3"/>
              <rect x="914" y="483" width="263" height="149" fill="#5f5f57"/>
              <rect x="914" y="483" width="6" height="142" fill="#9a6a50"/>
              <rect x="920" y="483" width="8" height="142" fill="#111"/>
              <rect x="914" y="530" width="6" height="50" fill="#111"/>
              <rect x="928" y="483" width="20" height="142" fill="url(#wood2)"/>
              <rect x="1161" y="483" width="16" height="142" fill="url(#wood3)"/>
              <rect x="949" y="483" width="203" height="123" fill="#2a2a2a"/>
              <rect x="950" y="484" width="26" height="21" fill="#e4e4e4"/>
              <rect x="979" y="484" width="143" height="21" fill="#e6e6e6"/>
              <rect x="1125" y="484" width="25" height="21" fill="#e8e8e8"/>
              <rect x="979" y="508" width="143" height="68" fill="url(#glass)"/>
              <rect x="953" y="510" width="20" height="64" fill="#ececec"/>
              <rect x="1127" y="510" width="21" height="64" fill="#ececec"/>
              <rect x="950" y="579" width="26" height="25" fill="#ececec"/>
              <rect x="979" y="579" width="143" height="25" fill="#eaeaea"/>
              <rect x="1125" y="579" width="25" height="25" fill="#eee"/>
              <path d="M972 512L953 541L972 573M1128 512L1147 541L1128 573" fill="none" stroke="#111" stroke-dasharray="2 2"/>
              <rect x="914" y="625" width="263" height="7" fill="#82827a"/>
              <path d="M949 625.5H1175" stroke="#111" stroke-dasharray="10 7"/>
              <path d="M904 625.5H1210M1208 618.5H1250M1208 618.5l7 7 6-7" fill="none" stroke="#666"/>
              <path d="M989.5 475V636" stroke="#111" stroke-dasharray="24 6"/>
              <circle cx="990" cy="645" r="8.5" fill="#fff" stroke="#111"/>
              <text x="990" y="650" class="gr">5</text>
              <text x="1239" y="616" class="lv">±0.000</text>
              <text x="1264" y="622" class="lv">标高1</text>
              <circle cx="1023" cy="518" r="30" fill="url(#halo)" opacity=".85"/>
              <path d="M1015 518H1031M1023 510V526" stroke="#111" stroke-dasharray="2 1"/>
              <path d="M1023 509l-3 4h6zM1023 527l-3-4h6zM1014 518l4-3v6zM1032 518l-4-3v6z" fill="#111"/>
            </svg>

            <!-- view title tag -->
            <div class="view-tag">客厅C立面</div>

            <!-- cover titles over the drawing -->
            <div class="cover-a">模块一</div>
            <div class="cover-b"><span class="quote">《</span>出图讲解<span class="quote">》</span></div>

            <!-- navigation bar -->
            <div class="nav-bar">
              <svg width="26" height="26" viewBox="0 0 32 32" v-html="icons.navWheel"></svg>
              <svg class="nav-zoom" width="20" height="20" viewBox="0 0 32 32" v-html="icons.navZoom"></svg>
              <svg class="nav-caret" width="8" height="8" viewBox="0 0 32 32" v-html="icons.caret"></svg>
              <span class="nav-end"></span>
            </div>
          </div>
          <div class="v-strip"><span class="v-thumb"></span></div>
        </div>
        <div class="h-strip">
          <svg width="16" height="16" viewBox="0 0 32 32" v-html="icons.sLink"></svg>
          <svg width="12" height="12" viewBox="0 0 32 32" v-html="icons.sPin"></svg>
          <span class="h-thumb"></span>
        </div>
      </section>

      <!-- project browser -->
      <aside class="browser">
        <div class="pane-head">项目浏览器 - 模块一-01.rvt<svg width="12" height="12" viewBox="0 0 32 32" v-html="icons.xBold"></svg></div>
        <div class="tree">
          <svg class="tree-lines" width="120" height="760"><path :d="treeGuides" fill="none" stroke="#999" stroke-dasharray="1 1"/></svg>
          <div v-for="(r, n) in tree" :key="n" class="node" :class="['lv' + r.lv, r.cls]">
            <span class="toggle" :class="{ none: !r.tog }">{{ r.tog === '-' ? '−' : r.tog }}</span>
            <svg v-if="r.icon" class="node-ic" width="16" height="16" viewBox="0 0 32 32" v-html="icons[r.icon]"></svg>
            <span class="node-text">{{ r.t }}</span>
          </div>
        </div>
      </aside>
    </div>

    <!-- status bar -->
    <div class="status">
      <span class="status-text">视口：视口：有线条的标题</span>
      <svg v-for="(c, n) in statusIcons" :key="n" class="st-first" :width="c.size" :height="c.h" viewBox="0 0 32 32" v-html="icons[c.i]"></svg>
      <div class="st-select s1"><svg width="9" height="9" viewBox="0 0 32 32"><path d="M5 11l11 11 11-11" fill="none" stroke="#999" stroke-width="2.5"/></svg></div>
      <svg class="st-q" width="16" height="16" viewBox="0 0 32 32" v-html="icons.q0"></svg>
      <span class="st-num">:0</span>
      <svg class="st-list" width="15" height="16" viewBox="0 0 32 32" v-html="icons.listbox"></svg>
      <svg class="st-lock" width="15" height="16" viewBox="0 0 32 32" v-html="icons.lockbox"></svg>
      <div class="st-select s2"><span>主模型</span><svg width="9" height="9" viewBox="0 0 32 32"><path d="M5 11l11 11 11-11" fill="none" stroke="#999" stroke-width="2.5"/></svg></div>
      <div class="st-filters">
        <svg v-for="(c, n) in statusFilters" :key="n" :width="c.size" :height="c.h" :style="{ marginLeft: c.m + 'px' }" viewBox="0 0 32 32" v-html="icons[c.i]"></svg>
        <span class="st-num">:1</span>
      </div>
    </div>

    <!-- windows taskbar -->
    <div class="taskbar">
      <span class="task-active"></span>
      <span class="task-dot d1"></span>
      <span class="task-dot d2"></span>
      <span class="task-dot d3"></span>
      <span class="task-dot d4"></span>
      <div class="task-icons">
        <svg v-for="(c, n) in taskIcons" :key="n" :width="c.size" :height="c.h" :style="{ marginLeft: c.m + 'px' }" viewBox="0 0 32 32" v-html="icons[c.i]"></svg>
      </div>
      <div class="tray">
        <svg v-for="(c, n) in trayIcons" :key="n" :width="c.size" :height="c.h" :style="{ marginLeft: c.m + 'px' }" viewBox="0 0 32 32" v-html="icons[c.i]"></svg>
        <span class="ime">中</span>
        <svg class="tray-net" width="20" height="20" viewBox="0 0 32 32" v-html="icons.pcnet"></svg>
        <svg class="tray-spk" width="16" height="16" viewBox="0 0 32 32" v-html="icons.speaker"></svg>
        <div class="clock"><div>13:27</div><div>2024/2/26</div></div>
        <span class="badge">3</span>
      </div>
    </div>
  </div>
</template>

<style scoped>
.app {
  width: 1920px;
  height: 1080px;
  display: flex;
  flex-direction: column;
  overflow: hidden;
  position: relative;
  background: #f0f0f0;
  color: #444;
  font-family: "Liberation Sans", "Noto Sans CJK SC", sans-serif;
  font-size: 12px;
}

/* title bar */
.titlebar {
  height: 28px;
  flex: none;
  background: #cdcdcd;
  display: flex;
  align-items: center;
  position: relative;
}
.doc-name {
  position: absolute;
  left: 1195px;
  top: 3px;
  font-size: 12px;
}
.title-right {
  position: absolute;
  left: 1320px;
  right: 0;
  top: 0;
  height: 24px;
  display: flex;
  align-items: center;
}
.uid {
  width: 84px;
  margin-left: 4px;
  color: #555;
  white-space: nowrap;
  font-size: 13px;
}
.recorder {
  position: absolute;
  left: 710px;
  top: 0;
  width: 488px;
  height: 25px;
  color: #eee;
}
.rec-bg { position: absolute; left: 0; top: 0; }
.rec-ic { position: absolute; top: 6px; }
.rec-ic.hamb { left: 32px; }
.rec-ic.pin { left: 58px; top: 5px; }
.rec-ic.pause { left: 335px; }
.rec-ic.stop { left: 363px; }
.rec-ic.cam { left: 393px; top: 5px; }
.rec-ic.pen { left: 423px; }
.rec-ic.closer { left: 454px; top: 7px; }
.rec-size, .rec-time { position: absolute; top: 5px; white-space: nowrap; font-size: 12.5px; }
.rec-size { left: 81px; }
.rec-time { left: 198px; }

/* ribbon tabs */
.tabs {
  height: 21px;
  flex: none;
  background: #cdcdcd;
  display: flex;
  align-items: center;
}
.tab {
  height: 21px;
  line-height: 21px;
  padding: 0 10px;
  white-space: nowrap;
  color: #4a4a4a;
}
.tab.file {
  width: 45px;
  padding: 0;
  text-align: center;
  background: #2a6ea6;
  color: #fff;
  margin-right: 2px;
}
.tab.wide {
  padding: 0;
  width: 116px;
  text-align: center;
}
.tab.enscape {
  padding: 0;
  width: 82px;
  text-align: center;
}
.tab.active {
  width: 77px;
  padding: 0;
  text-align: center;
  background: #ebf1e1;
}
.tab-ic { margin-left: 21px; margin-right: 2px; }

/* ribbon */
.ribbon {
  height: 95px;
  flex: none;
  display: flex;
  background: #e5eeda;
}
.panel {
  display: flex;
  flex-direction: column;
  background: #efefef;
  flex: none;
}
.panel-body {
  height: 77px;
  display: flex;
  padding-top: 4px;
  box-sizing: border-box;
}
.panel-label {
  flex: 1;
  text-align: center;
  line-height: 18px;
  background: #ecefe9;
  white-space: nowrap;
}
.panel.green .panel-label { background: #e4edd8; }
.col {
  display: flex;
  flex-direction: column;
  align-items: center;
  justify-content: space-between;
  flex: none;
  height: 70px;
}
.tool {
  display: flex;
  flex-direction: column;
  align-items: center;
  line-height: 18px;
  white-space: pre-line;
  text-align: center;
}
.tool.row {
  flex-direction: row;
  align-self: flex-start;
  gap: 5px;
}
.tool.tile { gap: 3px; margin-top: 3px; }
.tool.tile svg { height: 30px; }
.tool.dim { opacity: 0.45; }
.tool.sel {
  background: #c6e0f6;
  border: 1px solid #2f78b8;
  box-sizing: border-box;
}
.tool.sel.tall {
  width: 38px;
  height: 71px;
  padding-top: 6px;
  gap: 8px;
}
.tool.sel.box {
  width: 38px;
  height: 35px;
  justify-content: center;
}
.locate { width: 206px; }
.panel-body.locate-body {
  flex-direction: column;
  gap: 5px;
  padding: 16px 0 0 5px;
}
.rb-select {
  width: 200px;
  height: 21px;
  line-height: 21px;
  box-sizing: border-box;
  padding-left: 4px;
  background: #fafafa;
  border: 1px solid #ddd;
  position: relative;
  font-size: 11.5px;
}
.rb-arrow {
  position: absolute;
  right: 4px;
  top: 8px;
  border: 4px solid transparent;
  border-top: 5px solid #555;
}
.ribbon-rest { flex: 1; }

/* options */
.options {
  height: 27px;
  flex: none;
  background: #e9f0de;
  border-top: 1px solid #ccd4c2;
  box-sizing: border-box;
  display: flex;
  align-items: center;
}
.opt-mode { margin-left: 8px; width: 76px; }
.opt-sep { width: 1px; height: 19px; background: #bbb; }
.opt-label { margin-left: 10px; width: 80px; white-space: nowrap; }
.opt-select {
  width: 134px;
  height: 20px;
  margin-left: 5px;
  box-sizing: border-box;
  background: #fff;
  border: 1px solid #d5d5d5;
  padding: 0 4px;
  display: flex;
  align-items: center;
  justify-content: space-between;
}

.main {
  height: 837px;
  flex: none;
  display: flex;
  background: #c8c8c8;
}

/* properties */
.props {
  width: 220px;
  flex: none;
  background: #f0f0f0;
  display: flex;
  flex-direction: column;
}
.pane-head {
  height: 22px;
  flex: none;
  padding: 0 3px;
  display: flex;
  align-items: center;
  justify-content: space-between;
  background: #efefef;
}
.props .pane-head { padding-right: 5px; }
.type-box {
  height: 70px;
  flex: none;
  margin: 1px 4px 0 1px;
  border: 1px solid #ddd;
  box-sizing: border-box;
  display: flex;
  position: relative;
  align-items: center;
}
.type-thumb {
  width: 66px;
  height: 66px;
  margin-left: 3px;
  border: 1px solid #ddd;
  box-sizing: border-box;
}
.type-name { margin-left: 5px; line-height: 16px; }
.type-box .rb-arrow { top: 32px; right: 0; }
.inst-row {
  height: 26px;
  flex: none;
  margin: 1px 0 1px;
  display: flex;
  align-items: center;
  gap: 3px;
  white-space: nowrap;
}
.inst-select {
  width: 131px;
  height: 24px;
  margin: 0 2px 0 2px;
  padding: 0 5px 0 3px;
  box-sizing: border-box;
  background: #fff;
  border: 1px solid #ddd;
  display: flex;
  align-items: center;
  justify-content: space-between;
}
.grid-wrap {
  flex: 1;
  min-height: 0;
  display: flex;
  overflow: hidden;
}
.grid { width: 200px; flex: none; background: #fff; }
.grid-scroll {
  width: 2px;
  height: 540px;
  margin: 18px 0 0 7px;
  background: #777;
}
.sec-head {
  height: 20px;
  line-height: 20px;
  padding: 0 3px;
  background: #d8d8d8;
  color: #333;
  display: flex;
  justify-content: space-between;
  align-items: center;
}
.sec-head svg { margin-right: 6px; }
.prop-row {
  height: 20px;
  box-sizing: border-box;
  display: grid;
  grid-template-columns: 94px 93px 13px;
  line-height: 19px;
  border-bottom: 1px dotted #777;
  white-space: nowrap;
}
.prop-row.dim { color: #aaa; }
.pk { padding-left: 11px; overflow: hidden; border-right: 1px dotted #777; }
.pv { padding-left: 3px; white-space: pre; overflow: hidden; border-right: 1px dotted #777; }
.pbtn {
  display: block;
  width: 88px;
  height: 17px;
  line-height: 17px;
  margin-top: 1px;
  box-sizing: border-box;
  text-align: center;
  background: #f8f8f8;
  border: 1px solid #d8d8d8;
  border-radius: 3px;
  box-shadow: 0 1px 1px #bbb;
}
.pcheck {
  display: flex;
  align-items: center;
  justify-content: center;
  width: 13px;
  height: 13px;
  margin-top: 3px;
  margin-left: 1px;
  box-sizing: border-box;
  border: 1px solid #777;
  border-radius: 3px;
  background: #f4f4f4;
}
.pcheck.on { background: #1460b0; border-color: #1460b0; }
.props-foot {
  height: 25px;
  flex: none;
  background: #f0f0f0;
  display: flex;
  align-items: center;
  justify-content: space-between;
  padding: 0 7px 0 3px;
}
.help-link { color: #2a78b8; text-decoration: underline; }
.apply {
  width: 70px;
  height: 17px;
  line-height: 17px;
  text-align: center;
  color: #aaa;
  background: #f6f6f6;
}

/* document area */
.center {
  flex: 1;
  min-width: 0;
  margin: 0 5px 0 2px;
  display: flex;
  flex-direction: column;
}
.doc-tabs {
  height: 23px;
  flex: none;
  display: flex;
  align-items: center;
  position: relative;
}
.doc-tab {
  position: absolute;
  top: 1px;
  height: 22px;
  display: flex;
  align-items: center;
  gap: 9px;
  white-space: nowrap;
  color: #555;
}
.doc-tab svg { opacity: 0.65; }
.doc-tab.t1 { left: 3px; }
.doc-tab.t2 { left: 130px; }
.doc-tab.t3 { left: 262px; gap: 7px; }
.doc-tab.cur {
  left: 388px;
  width: 125px;
  padding-left: 3px;
  gap: 7px;
  box-sizing: border-box;
  background: #fff;
  color: #333;
  font-weight: 700;
}
.doc-x { margin-left: 17px; }
.doc-tab.cur svg { opacity: 1; }
.doc-menu { position: absolute; right: 2px; top: 8px; }
.canvas-row { flex: 1; display: flex; min-height: 0; }
.canvas {
  width: 1334px;
  height: 794px;
  background: #fff;
  position: relative;
  overflow: hidden;
  flex: none;
}
.sheet { display: block; }
.tb { font-size: 21px; fill: #222; text-anchor: middle; font-family: "Liberation Sans", "Noto Sans CJK SC", sans-serif; }
.tb.big { font-size: 23.5px; }
.dm { font-size: 8px; fill: #111; text-anchor: middle; font-weight: 700; font-family: "Liberation Sans", sans-serif; }
.gr { font-size: 13px; fill: #111; text-anchor: middle; font-family: "Liberation Sans", sans-serif; }
.ttl { font-size: 15.5px; fill: #222; text-anchor: middle; font-family: "Liberation Sans", "Noto Sans CJK SC", sans-serif; }
.lv { font-size: 8px; fill: #222; text-anchor: middle; font-family: "Liberation Sans", "Noto Sans CJK SC", sans-serif; }
.view-tag {
  position: absolute;
  left: 786px;
  top: 510px;
  width: 74px;
  height: 32px;
  box-sizing: border-box;
  border: 1px solid #b0c4d8;
  color: #2f5878;
  font-size: 15.5px;
  text-align: center;
  line-height: 40px;
  background: #fff;
  white-space: nowrap;
}
.cover-a, .cover-b {
  position: absolute;
  white-space: nowrap;
  line-height: 1;
  font-family: "Noto Sans CJK SC", sans-serif;
  font-weight: 900;
  paint-order: stroke fill;
}
.cover-a {
  left: 683px;
  top: 78px;
  font-size: 129px;
  letter-spacing: 14px;
  color: #fff;
  -webkit-text-stroke: 24px #0a0a0a;
}
.cover-b {
  left: 540px;
  top: 538px;
  font-size: 118px;
  letter-spacing: 13px;
  color: #ffe733;
  -webkit-text-stroke: 28px #0a0a0a;
}
.quote {
  display: inline-block;
  transform: scaleY(1.14);
  transform-origin: center;
}
.nav-bar {
  position: absolute;
  left: 1296px;
  top: 2px;
  width: 35px;
  height: 116px;
  box-sizing: border-box;
  padding-top: 17px;
  background: #f4f4f4;
  border: 1px solid #ccc;
  border-radius: 5px;
  display: flex;
  flex-direction: column;
  align-items: center;
}
.nav-zoom { margin-top: 20px; }
.nav-caret { margin-top: 5px; }
.nav-end {
  width: 8px;
  height: 8px;
  margin-top: 10px;
  border-radius: 50%;
  border: 2px solid #bbb;
  box-sizing: border-box;
}
.v-strip {
  flex: 1;
  background: #f0f0f0;
  position: relative;
}
.v-thumb {
  position: absolute;
  left: 6px;
  top: 391px;
  width: 2px;
  height: 15px;
  background: #888;
}
.h-strip {
  height: 20px;
  flex: none;
  background: #f0f0f0;
  display: flex;
  align-items: center;
  gap: 6px;
  padding-left: 4px;
  position: relative;
}
.h-thumb {
  position: absolute;
  left: 678px;
  top: 5px;
  width: 18px;
  height: 2px;
  background: #888;
}

/* browser */
.browser {
  width: 345px;
  flex: none;
  background: #fff;
  display: flex;
  flex-direction: column;
}
.browser .pane-head { padding-right: 3px; padding-left: 5px; }
.tree {
  flex: 1;
  position: relative;
  margin: -2px 0 0 -5px;
}
.tree-lines { position: absolute; left: 0; top: 0; }
.node {
  height: 20px;
  display: flex;
  align-items: center;
  position: relative;
  white-space: nowrap;
  color: #333;
}
.lv0 { padding-left: 11px; }
.lv1 { padding-left: 31px; }
.lv2 { padding-left: 50px; }
.lv3 { padding-left: 70px; }
.lv0 .node-ic { margin-left: 6px; }
.lv2 .node-ic, .lv3 .node-ic { margin-left: 7px; }
.node-text { margin-left: 6px; padding: 0 1px; }
.lv1 .node-text { margin-left: 12px; }
.cur .node-text { background: #e4e4e4; line-height: 20px; }
.bold .node-text { font-weight: 700; color: #222; }
.toggle {
  width: 10px;
  height: 10px;
  flex: none;
  box-sizing: border-box;
  border: 1px solid #999;
  background: #f6f6f6;
  font-size: 9px;
  line-height: 8px;
  text-align: center;
  color: #444;
}
.toggle.none { visibility: hidden; }

/* status */
.status {
  height: 24px;
  flex: none;
  background: #c9c9c9;
  display: flex;
  align-items: center;
  position: relative;
}
.status-text { width: 943px; padding-left: 1px; box-sizing: border-box; white-space: nowrap; }
.st-select {
  height: 18px;
  box-sizing: border-box;
  background: #fff;
  display: flex;
  align-items: center;
  justify-content: flex-end;
  padding-right: 5px;
}
.st-select.s1 { width: 204px; margin-left: 7px; }
.st-select.s2 { width: 203px; margin-left: 7px; justify-content: space-between; padding-left: 2px; color: #888; }
.st-q { margin-left: 10px; }
.st-num { margin-left: 1px; color: #333; }
.st-list { margin-left: 24px; }
.st-lock { margin-left: 10px; }
.st-filters { margin-left: 176px; display: flex; align-items: center; }

/* taskbar */
.taskbar {
  flex: 1;
  background: #f2f2f2;
  display: flex;
  align-items: center;
  position: relative;
}
.task-active {
  position: absolute;
  left: 498px;
  top: 5px;
  width: 40px;
  height: 38px;
  background: #fbfbfb;
  border-radius: 4px;
}
.task-dot {
  position: absolute;
  top: 40px;
  width: 5px;
  height: 3px;
  border-radius: 2px;
  background: #888;
}
.task-dot.d1 { left: 426px; }
.task-dot.d2 { left: 470px; }
.task-dot.d3 { left: 510px; width: 15px; background: #777; }
.task-dot.d4 { left: 558px; }
.task-icons { display: flex; align-items: center; position: relative; }
.tray {
  position: absolute;
  left: 1673px;
  right: 0;
  top: 0;
  bottom: 0;
  display: flex;
  align-items: center;
  color: #222;
}
.ime { margin-left: 16px; font-size: 14px; }
.tray-net { margin-left: 15px; }
.tray-spk { margin-left: 4px; }
.clock {
  margin-left: 12px;
  width: 62px;
  text-align: right;
  line-height: 19px;
  font-size: 11.5px;
  white-space: nowrap;
}
.badge {
  margin-left: 7px;
  width: 15px;
  height: 15px;
  border-radius: 50%;
  background: #5a6b85;
  color: #fff;
  text-align: center;
  line-height: 15px;
  font-size: 10px;
}
</style>

<style>
html, body { margin: 0; overflow: hidden; }
</style>
